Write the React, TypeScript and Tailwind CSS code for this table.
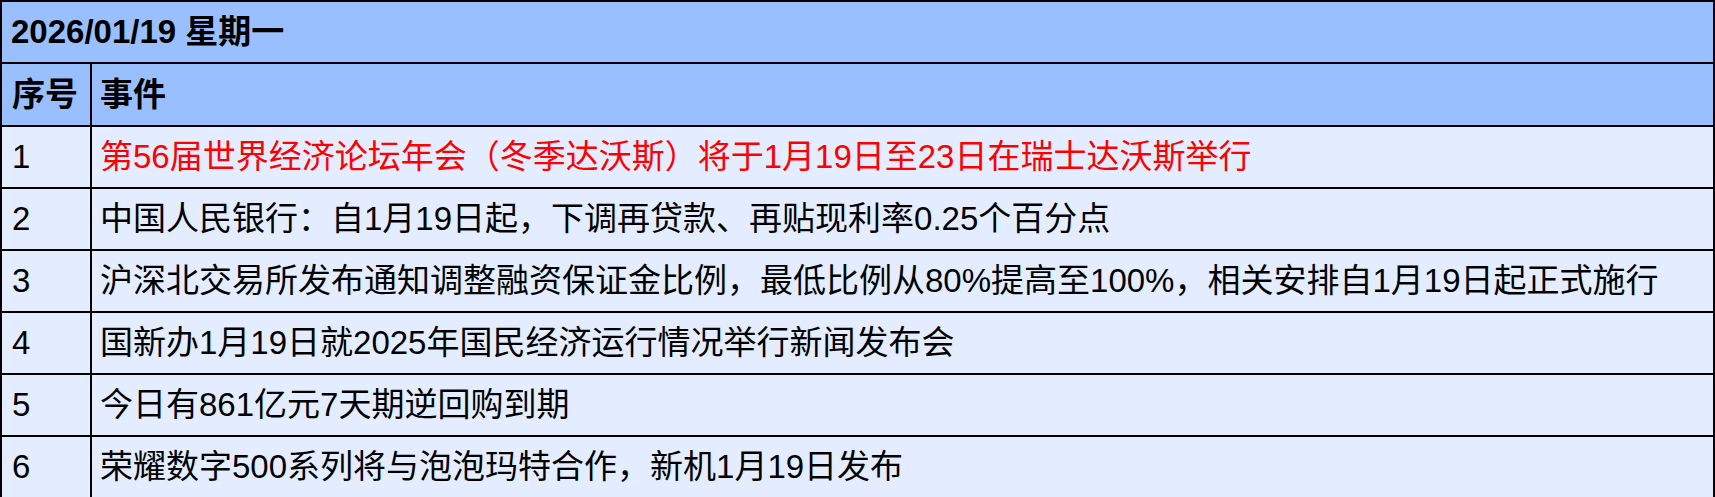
import React from 'react';

const events = [
  { id: 1, text: '第56届世界经济论坛年会（冬季达沃斯）将于1月19日至23日在瑞士达沃斯举行', red: true },
  { id: 2, text: '中国人民银行：自1月19日起，下调再贷款、再贴现利率0.25个百分点' },
  { id: 3, text: '沪深北交易所发布通知调整融资保证金比例，最低比例从80%提高至100%，相关安排自1月19日起正式施行' },
  { id: 4, text: '国新办1月19日就2025年国民经济运行情况举行新闻发布会' },
  { id: 5, text: '今日有861亿元7天期逆回购到期' },
  { id: 6, text: '荣耀数字500系列将与泡泡玛特合作，新机1月19日发布' },
];

const App: React.FC = () => {
  return (
    <div className="w-[1715px] h-[497px] bg-white font-['Liberation_Sans','Noto_Sans_CJK_SC',sans-serif] text-[33px] text-black">
      <table className="w-full border-collapse border-2 border-[#333]">
        <tbody>
          <tr className="h-[62px] bg-[#99bfff]">
            <td colSpan={2} className="border-2 border-black pl-[9px] font-bold">
              2026/01/19 星期一
            </td>
          </tr>
          <tr className="h-[63px] bg-[#99bfff] font-bold">
            <td className="w-[90px] border-2 border-black pl-[10px]">序号</td>
            <td className="border-2 border-black pl-[8px]">事件</td>
          </tr>
          {/* 事件列表 */}
          {events.map((ev) => (
            <tr key={ev.id} className="h-[62px] bg-[#e3edff]">
              <td className="w-[90px] border-2 border-black pl-[10px]">{ev.id}</td>
              <td className={`border-2 border-black pl-[8px] ${ev.red ? 'text-[#ff0000]' : ''}`}>
                {ev.text}
              </td>
            </tr>
          ))}
        </tbody>
      </table>
    </div>
  );
};

export default App;
